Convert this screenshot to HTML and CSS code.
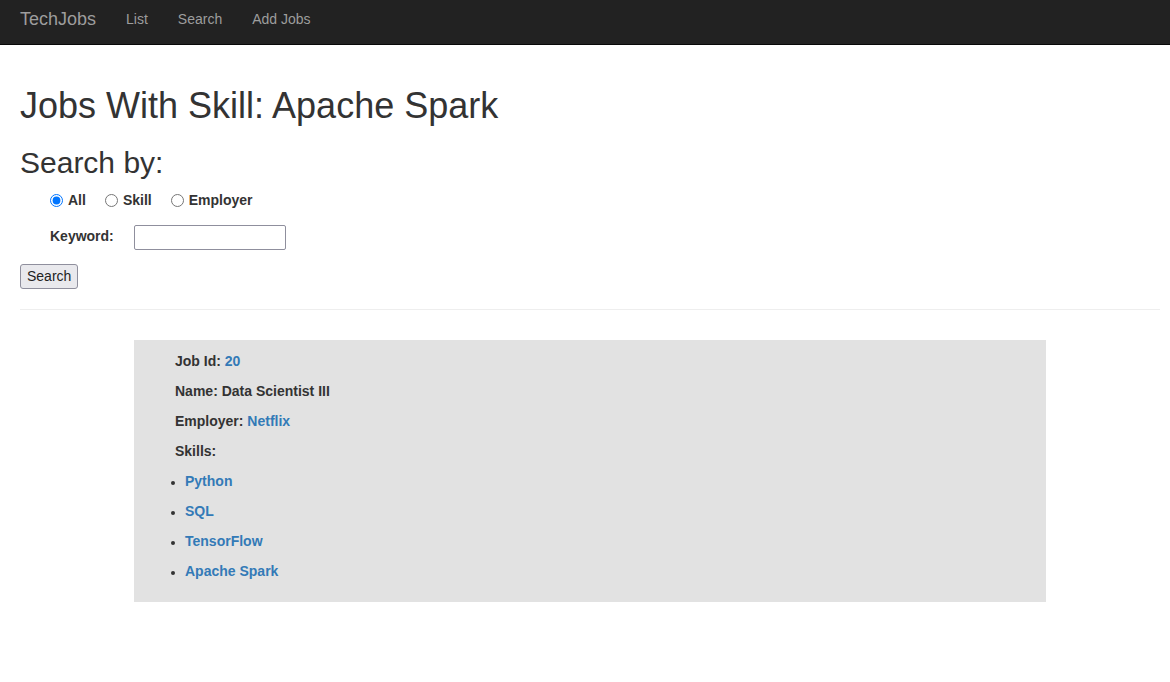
FILE: index.html
```html
<!DOCTYPE html>
<html>
<head>
<meta charset="utf-8">
<title>TechJobs</title>
<link rel="stylesheet" href="styles.css">
</head>
<body>
<nav class="navbar">
  <a class="brand" href="#">TechJobs</a>
  <ul class="nav-links">
    <li><a href="#">List</a></li>
    <li><a href="#">Search</a></li>
    <li><a href="#">Add Jobs</a></li>
  </ul>
</nav>
<main class="page">
  <h1 class="title">Jobs With Skill: Apache Spark</h1>
  <h2 class="subtitle">Search by:</h2>
  <form class="search-form">
    <div class="radio-row">
      <label class="radio"><input type="radio" name="type" checked> All</label>
      <label class="radio"><input type="radio" name="type"> Skill</label>
      <label class="radio"><input type="radio" name="type"> Employer</label>
    </div>
    <div class="keyword-row">
      <label class="keyword-label" for="kw">Keyword:</label>
      <input class="keyword-input" id="kw" type="text">
    </div>
    <button class="search-btn" type="button">Search</button>
  </form>
  <hr class="divider">
  <section class="job-card">
    <p class="field">Job Id: <a href="#">20</a></p>
    <p class="field">Name: Data Scientist III</p>
    <p class="field">Employer: <a href="#">Netflix</a></p>
    <p class="field">Skills:</p>
    <ul class="skills">
      <li><a href="#">Python</a></li>
      <li><a href="#">SQL</a></li>
      <li><a href="#">TensorFlow</a></li>
      <li><a href="#">Apache Spark</a></li>
    </ul>
  </section>
</main>
</body>
</html>
```

FILE: styles.css
```css
* { box-sizing: border-box; }
html, body { margin: 0; padding: 0; }
body {
  font-family: "Liberation Sans", Arial, sans-serif;
  font-size: 14px;
  line-height: 1.42857;
  color: #333;
  background: #fff;
}
a { color: #337ab7; text-decoration: none; }

.navbar {
  display: flex;
  align-items: center;
  height: 45px;
  background: #222;
  border-bottom: 1px solid #080808;
  padding: 0 20px;
}
.brand {
  color: #9d9d9d;
  font-size: 18px;
  line-height: 20px;
  margin-top: -7px;
}
.nav-links {
  display: flex;
  list-style: none;
  margin: -7px 0 0 0;
  padding: 0 0 0 15px;
}
.nav-links a {
  display: block;
  color: #9d9d9d;
  padding: 0 15px;
  line-height: 20px;
}

.page { padding: 0 10px 0 20px; }
.title {
  font-size: 36px;
  font-weight: 500;
  line-height: 1.1;
  margin: 41px 0 20px;
}
.subtitle {
  font-size: 30px;
  font-weight: 500;
  line-height: 1.1;
  margin: 0 0 12px;
}
.search-form { display: flex; flex-direction: column; align-items: flex-start; }
.radio-row {
  display: flex;
  gap: 14px;
  padding-left: 25px;
  height: 20px;
  align-items: center;
}
.radio {
  display: flex;
  align-items: center;
  gap: 5px;
  font-weight: bold;
}
.radio input { margin: 0 0 0 5px; width: 13px; height: 13px; }
.keyword-row {
  display: flex;
  align-items: center;
  margin-top: 14px;
  padding-left: 30px;
}
.keyword-label { font-weight: bold; width: 84px; }
.keyword-input {
  width: 152px;
  height: 25px;
  border: 1px solid #8f8f9d;
  border-radius: 2px;
  font: inherit;
}
.search-btn {
  margin-top: 14px;
  height: 25px;
  padding: 0 6px;
  font-family: "Liberation Sans", Arial, sans-serif;
  font-size: 14px;
  color: #222;
  background: #e9e9ed;
  border: 1px solid #8f8f9d;
  border-radius: 3px;
}
.divider {
  border: 0;
  border-top: 1px solid #eee;
  margin: 20px 0 30px 0;
}
.job-card {
  width: 912px;
  margin-left: 114px;
  background: #e2e2e2;
  padding: 11px 41px 11px;
  font-weight: bold;
}
.field { margin: 0 0 10px; line-height: 20px; }
.skills {
  margin: 0;
  padding: 0 0 0 10px;
}
.skills li { line-height: 20px; margin-bottom: 10px; }
.skills li::marker { font-size: 12px; }
.skills a { font-weight: bold; }
```
